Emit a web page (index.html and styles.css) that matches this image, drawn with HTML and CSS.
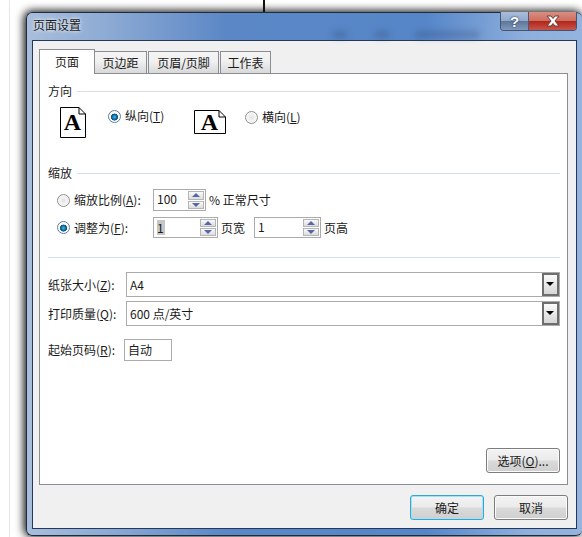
FILE: index.html
```html
<!DOCTYPE html>
<html lang="zh">
<head>
<meta charset="utf-8">
<title>页面设置</title>
<link rel="stylesheet" href="styles.css">
</head>
<body>
<div class="stage">
  <div class="cursor-line"></div>
  <div class="dialog">
    <div class="ghost ghost-a"></div>
    <div class="ghost ghost-b"></div>
    <div class="ghost ghost-c"></div>
    <div class="titlebar">
      <span class="title">页面设置</span>
      <div class="caption">
        <span class="cap help">?</span>
        <span class="cap close">
          <svg width="18" height="12" viewBox="0 0 18 12"><path d="M3 1h4l2 2.5L11 1h4l-4 5 4 5h-4L9 8.500 7 11H3l4-5z" fill="#fff" stroke="#6b3a34" stroke-width="1"/></svg>
        </span>
      </div>
    </div>
    <div class="client">
      <div class="tabs">
        <div class="tab active">页面</div>
        <div class="tab t1">页边距</div>
        <div class="tab t2">页眉/页脚</div>
        <div class="tab t3">工作表</div>
      </div>
      <div class="panel">
        <div class="heading"><span>方向</span><i></i></div>
        <div class="orient">
          <svg class="page portrait" width="26" height="31" viewBox="0 0 26 31">
            <path d="M.5.5H19L25.500 7V30.500H.5z" fill="#fff" stroke="#000"/>
            <path d="M19 .5V7h6.500" fill="none" stroke="#000"/>
            <text x="12.500" y="23" class="glyph">A</text>
          </svg>
          <label class="radio-label r1"><span class="radio on"></span><span>纵向(<u>T</u>)</span></label>
          <svg class="page landscape" width="32" height="24" viewBox="0 0 32 24">
            <path d="M.5.5H25L31.500 7V23.500H.5z" fill="#fff" stroke="#000"/>
            <path d="M25 .5V7h6.500" fill="none" stroke="#000"/>
            <text x="15.500" y="19.500" class="glyph">A</text>
          </svg>
          <label class="radio-label r2"><span class="radio"></span><span>横向(<u>L</u>)</span></label>
        </div>
        <div class="heading scale-head"><span>缩放</span><i></i></div>
        <div class="scale-row row-a">
          <label class="radio-label opt"><span class="radio"></span><span>缩放比例(<u>A</u>):</span></label>
          <div class="spin w-a"><span class="val">100</span><span class="arrows"><b class="up"></b><b class="down"></b></span></div>
          <span class="after">% 正常尺寸</span>
        </div>
        <div class="scale-row row-b">
          <label class="radio-label opt"><span class="radio on"></span><span>调整为(<u>F</u>):</span></label>
          <div class="spin w-b"><span class="val sel">1</span><span class="arrows"><b class="up"></b><b class="down"></b></span></div>
          <span class="after fit-a">页宽</span>
          <div class="spin w-c"><span class="val">1</span><span class="arrows"><b class="up"></b><b class="down"></b></span></div>
          <span class="after">页高</span>
        </div>
        <div class="sep"></div>
        <div class="field-row first">
          <span class="lab">纸张大小(<u>Z</u>):</span>
          <div class="combo"><span class="combo-val">A4</span><span class="drop"></span></div>
        </div>
        <div class="field-row">
          <span class="lab">打印质量(<u>Q</u>):</span>
          <div class="combo"><span class="combo-val">600 点/英寸</span><span class="drop"></span></div>
        </div>
        <div class="start-row">
          <span class="lab narrow">起始页码(<u>R</u>):</span>
          <div class="textbox">自动</div>
        </div>
        <div class="options-row"><button class="btn" type="button">选项(<u>O</u>)...</button></div>
      </div>
      <div class="footer">
        <button class="btn default" type="button">确定</button>
        <button class="btn" type="button">取消</button>
      </div>
    </div>
  </div>
</div>
</body>
</html>
```

FILE: styles.css
```css
* { box-sizing: border-box; }
html, body { margin: 0; height: 100%; overflow: hidden; background: #fff; }
body { font: 12px/16px "Noto Sans CJK SC", "Liberation Sans", sans-serif; color: #1a1a1a; }
.stage { position: relative; width: 582px; height: 537px; padding: 12px 0 0 26px; overflow: hidden; }
.stage::before { content: ""; position: absolute; left: 9px; top: 0; bottom: 0; width: 1px; background: #e6e6e6; }
.cursor-line { position: absolute; left: 263px; top: 0; width: 2px; height: 12px; background: #111; z-index: 1; }

.dialog { position: relative; width: 556px; height: 524px; padding: 0 5px 6px 5px; border-radius: 6px;
  background: linear-gradient(90deg, #a8bedb 0, #8eabd4 14%, #5b87c6 36%, #5686c8 72%, #8fb0dd 90%, #94b3de 100%);
  border: 1px solid #1d2c40; border-right: 0;
  box-shadow: -2px 0 10px rgba(0,0,0,.75), 0 -1px 9px rgba(0,0,0,.55);
  display: flex; flex-direction: column; }
.ghost { position: absolute; top: 18px; height: 7px; background: rgba(40,60,100,.28); filter: blur(3px); }
.ghost-a { left: 306px; width: 14px; }
.ghost-b { left: 348px; width: 14px; }
.ghost-c { left: 388px; width: 64px; }

.titlebar { position: relative; height: 27px; flex: none; display: flex; justify-content: space-between; }
.title { padding: 4px 0 0 1px; font-size: 12px; line-height: 16px; color: #1c1c1c; text-shadow: 0 0 5px rgba(255,255,255,.8), 0 0 3px rgba(255,255,255,.7); }
.caption { display: flex; height: 19px; margin-top: -1px; border: 1px solid #44546b; border-top: 0; border-radius: 0 0 4px 4px; overflow: hidden; }
.cap { display: flex; align-items: center; justify-content: center; height: 100%; }
.help { width: 28px; font: bold 15px/17px "Liberation Sans", sans-serif; color: #fff; text-shadow: 0 0 2px #2c3e5c, 0 0 1px #2c3e5c;
  background: linear-gradient(#a9bedb 0, #90a9cc 48%, #5d7699 52%, #7f98bb 100%); border-right: 1px solid #4c5a72; }
.close { width: 47px; background: linear-gradient(#d98f82 0, #cf6d60 48%, #b0271c 52%, #c9544a 100%); }

.client { flex: 1; display: flex; flex-direction: column; background: #f0f0f0; border: 1px solid #24385a; padding: 8px 8px 8px 6px; }
.tabs { display: flex; align-items: flex-end; height: 25px; position: relative; z-index: 1; margin-bottom: -1px; }
.tab { height: 23px; border: 1px solid #8a8d94; border-left-width: 0; text-align: center; padding-top: 3px;
  background: linear-gradient(#f4f4f4, #f0f0f0 45%, #d8d8d8); }
.active { height: 25px; width: 56px; background: #fff; border-left-width: 1px; border-bottom: 0; padding-top: 4px; }
.t1 { width: 52px; }
.t2 { width: 71px; margin-left: 1px; border-left-width: 1px; }
.t3 { width: 51px; margin-left: 1px; border-left-width: 1px; }

.panel { height: 412px; width: 529px; background: #fff; border: 1px solid #8a8d94; padding: 9px 7px 0 8px; display: flex; flex-direction: column; flex: none; }
.heading { display: flex; align-items: center; gap: 5px; height: 16px; flex: none; }
.heading i { flex: 1; height: 1px; background: #d5dfe5; }

.orient { height: 58px; margin-top: 8px; display: flex; align-items: flex-start; flex: none; }
.page { flex: none; }
.glyph { font: bold 24px "Liberation Serif", serif; text-anchor: middle; fill: #000; }
.portrait { margin-left: 12px; }
.landscape { margin-left: 31px; margin-top: 3px; }
.radio-label { display: inline-flex; align-items: center; gap: 4px; height: 16px; white-space: nowrap; flex: none; }
.r1 { margin: 1px 0 0 22px; width: 55px; }
.r2 { margin: 2px 0 0 19px; }
.radio { width: 13px; height: 13px; border-radius: 50%; border: 1px solid #8f8f8f; background: radial-gradient(circle, #e2e2e2 0, #f4f4f4 45%, #cfcfcf 100%); flex: none; box-shadow: inset 0 0 0 1px #fff; }
.radio.on { border-color: #5f7f9b; background: radial-gradient(circle at 50% 55%, #43c3f0 0, #0a6aa8 28%, #174e79 40%, #fff 46%, #e4e4e4 100%); }

.scale-row { display: flex; align-items: center; flex: none; padding-left: 9px; }
.row-a { height: 22px; margin-top: 8px; }
.row-b { height: 21px; margin-top: 6px; }
.opt { width: 96px; }
.spin { display: flex; height: 100%; border: 1px solid #ababab; background: #fff; flex: none; align-items: stretch; justify-content: space-between; }
.w-a { width: 53px; }
.w-b { width: 65px; }
.w-c { width: 67px; }
.val { padding-left: 3px; line-height: 18px; }
.sel { background: #c6c6c6; height: 15px; margin: 2px 0 0 3px; padding: 0; line-height: 15px; width: 8px; }
.arrows { width: 17px; display: flex; flex-direction: column; gap: 1px; padding: 1px 1px 1px 0; }
.arrows b { flex: 1; border: 1px solid #b5b5b5; background: linear-gradient(#fafafa, #dcdcdc); position: relative; }
.arrows b::after { content: ""; position: absolute; left: 50%; top: 50%; margin: -2px 0 0 -4px; border: 4px solid transparent; border-top: 0; border-bottom: 4px solid #5566aa; }
.arrows .down::after { border-bottom: 0; border-top: 4px solid #5566aa; }
.after { margin-left: 3px; }
.fit-a { width: 33px; flex: none; }

.sep { height: 1px; background: #d5dfe5; margin-top: 19px; flex: none; }
.field-row { display: flex; align-items: center; height: 25px; margin-top: 4px; flex: none; }
.first { margin-top: 14px; }
.lab { width: 78px; flex: none; }
.narrow { width: 76px; }
.combo { flex: 1; height: 100%; border: 1px solid #ababab; display: flex; justify-content: space-between; background: #fff; }
.combo-val { padding: 4px 0 0 3px; }
.drop { width: 17px; height: 100%; border: 2px solid #6e6e6e; background: linear-gradient(#fbfbfb, #d6d6d6); position: relative; }
.drop::after { content: ""; position: absolute; left: 2px; top: 7px; border: 4px solid transparent; border-bottom: 0; border-top: 4px solid #000; }
.start-row { display: flex; align-items: center; height: 22px; margin-top: 13px; flex: none; }
.textbox { width: 48px; height: 100%; border: 1px solid #ababab; padding: 2px 0 0 3px; }
.options-row { display: flex; justify-content: flex-end; margin-top: 87px; flex: none; }

.btn { width: 74px; height: 25px; padding: 0; border: 1px solid #7d7d7d; border-radius: 3px; color: #1a1a1a;
  font: 12px/16px "Noto Sans CJK SC", "Liberation Sans", sans-serif;
  background: linear-gradient(#f3f3f3 0, #ebebeb 48%, #dadada 52%, #cfcfcf 100%); box-shadow: inset 0 0 0 1px #fbfbfb; }
.default { border-color: #3aa3cf; box-shadow: inset 0 0 0 1px #9fe3f7; }
.footer { display: flex; justify-content: flex-end; gap: 10px; margin-top: 10px; }
```
